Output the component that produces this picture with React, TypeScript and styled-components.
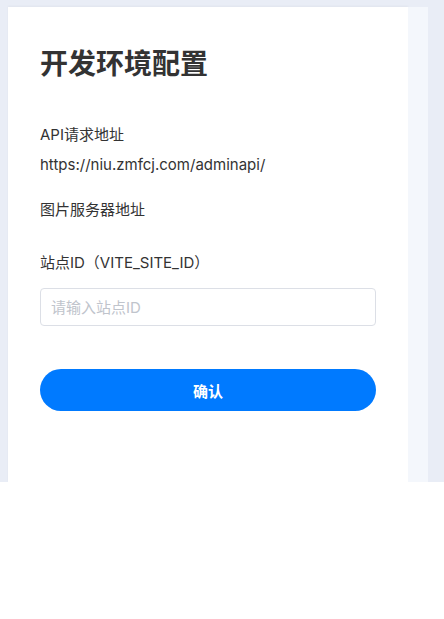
import styled, { createGlobalStyle } from 'styled-components';

const GlobalStyle = createGlobalStyle`
  html, body {
    margin: 0;
    padding: 0;
    background: #fff;
  }

  * {
    box-sizing: border-box;
  }
`;

const fields = [
  { label: 'API请求地址', value: 'https://niu.zmfcj.com/adminapi/' },
  { label: '图片服务器地址', value: '' },
];

const App = () => {
  return (
    <>
      <GlobalStyle />
      <Page>
        <Card>
          <Title>开发环境配置</Title>

          <FieldList>
            {fields.map(f => (
              <Field key={f.label}>
                <Label>{f.label}</Label>
                {f.value && <Value>{f.value}</Value>}
              </Field>
            ))}
          </FieldList>

          <InputField>
            <Label>站点ID（VITE_SITE_ID）</Label>
            <Input placeholder="请输入站点ID" />
          </InputField>

          <ConfirmButton type="button">确认</ConfirmButton>
        </Card>
        <SideStrip />
      </Page>
    </>
  );
};

export default App;

const font = `Inter, 'Noto Sans CJK SC', sans-serif`;

const Page = styled.div`
  display: flex;
  height: 482px;
  padding: 7px 16px 0 8px;
  background: #e9edf6;
  font-family: ${font};
`;

const Card = styled.main`
  width: 400px;
  padding: 37px 32px 0;
  background: #fff;
  box-shadow: 0 -1px 2px rgba(0, 0, 0, 0.04);
`;

const SideStrip = styled.aside`
  width: 20px;
  background: #f4f7fc;
`;

const Title = styled.h1`
  margin: 0 0 41px;
  font-size: 28px;
  line-height: 40px;
  font-weight: 700;
  color: #333;
`;

const FieldList = styled.div`
  display: flex;
  flex-direction: column;
  gap: 25px;
`;

const Field = styled.div`
  display: flex;
  flex-direction: column;
  gap: 10px;
`;

const Label = styled.div`
  font-size: 15px;
  line-height: 20px;
  color: #333;
`;

const Value = styled.div`
  font-size: 15px;
  line-height: 20px;
  color: #333;
`;

const InputField = styled.div`
  display: flex;
  flex-direction: column;
  gap: 15px;
  margin-top: 33px;
`;

const Input = styled.input`
  width: 100%;
  height: 38px;
  padding: 0 10px;
  border: 1px solid #dcdfe6;
  border-radius: 4px;
  font-family: ${font};
  font-size: 15px;
  color: #333;
  outline: none;

  &::placeholder {
    color: #c0c4cc;
  }
`;

const ConfirmButton = styled.button`
  display: block;
  width: 100%;
  height: 42px;
  margin-top: 43px;
  border: 0;
  border-radius: 21px;
  background: #007aff;
  color: #fff;
  font-family: ${font};
  font-size: 15px;
  font-weight: 700;
  cursor: pointer;
`;
